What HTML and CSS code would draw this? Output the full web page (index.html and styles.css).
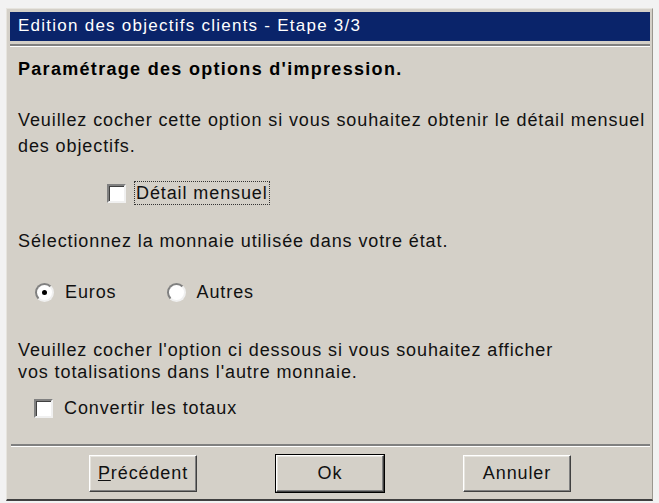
FILE: index.html
```html
<!DOCTYPE html>
<html lang="fr">
<head>
    <meta charset="UTF-8">
    <title>Edition des objectifs clients - Etape 3/3</title>
    <link rel="stylesheet" href="styles.css">
</head>
<body>

    <!-- Dialog window -->
    <div class="window">
        <div class="titlebar">Edition des objectifs clients - Etape 3/3</div>
        <div class="separator"></div>

        <div class="content">
            <h1 class="heading">Paramétrage des options d'impression.</h1>

            <p class="text text-first">Veuillez cocher cette option si vous souhaitez obtenir le détail mensuel<br>des objectifs.</p>

            <label class="option option-detail">
                <span class="checkbox"></span>
                <span class="focus-label">Détail mensuel</span>
            </label>

            <p class="text text-currency">Sélectionnez la monnaie utilisée dans votre état.</p>

            <div class="radios">
                <label class="option">
                    <span class="radio checked"></span>
                    <span>Euros</span>
                </label>
                <label class="option">
                    <span class="radio"></span>
                    <span>Autres</span>
                </label>
            </div>

            <p class="text text-convert">Veuillez cocher l'option ci dessous si vous souhaitez afficher<br>vos totalisations dans l'autre monnaie.</p>

            <label class="option option-convert">
                <span class="checkbox"></span>
                <span>Convertir les totaux</span>
            </label>
        </div>

        <div class="separator separator-bottom"></div>

        <div class="buttons">
            <button class="btn"><u>P</u>récédent</button>
            <button class="btn btn-default">Ok</button>
            <button class="btn">Annuler</button>
        </div>
    </div>

</body>
</html>
```

FILE: styles.css
```css
body {
    margin: 0;
    background-color: #f2f2f2;
    font-family: "Liberation Sans", Arial, sans-serif;
    font-size: 18px;
    letter-spacing: 0.9px;
    color: #111;
}

.window {
    margin: 8px 6px 0 6px;
    height: 493px;
    box-sizing: border-box;
    padding: 3px 2px 0 3px;
    background-color: #d4d0c8;
    border-top: 1px solid #e6e4de;
    border-left: 1px solid #e6e4de;
    border-right: 1px solid #9a978f;
    border-bottom: 2px solid #404040;
    display: flex;
    flex-direction: column;
}

.titlebar {
    height: 29px;
    line-height: 28px;
    padding-left: 8px;
    background-color: #0a246a;
    color: #fff;
    font-size: 17px;
    letter-spacing: 1.25px;
}

.separator {
    margin-top: 3px;
    border-top: 2px solid #808080;
    border-bottom: 1px solid #fff;
}

.content {
    flex: 1;
    padding-left: 8px;
    white-space: nowrap;
}

.heading {
    margin: 11px 0 0 0;
    font-size: 18px;
    line-height: 22px;
    font-weight: bold;
    letter-spacing: 1.3px;
    color: #000;
}

.text {
    margin: 0;
    line-height: 26px;
}

.text-first {
    margin-top: 27px;
}

.text-currency {
    margin-top: 24px;
}

.text-convert {
    margin-top: 36px;
    line-height: 22px;
}

.option {
    display: flex;
    align-items: center;
    gap: 11px;
}

.option-detail {
    margin-top: 23px;
    margin-left: 89px;
    gap: 9px;
}

.option-convert {
    margin-top: 15px;
    margin-left: 16px;
}

.checkbox {
    width: 15px;
    height: 15px;
    background-color: #fff;
    border-top: 2px solid #808080;
    border-left: 2px solid #808080;
    border-right: 2px solid #f0f0f0;
    border-bottom: 2px solid #f0f0f0;
    box-shadow: inset 1px 1px 0 #404040;
}

.focus-label {
    padding: 0 1px;
    line-height: 22px;
    outline: 1px dotted #333;
}

.radios {
    display: flex;
    gap: 50px;
    margin-top: 28px;
    margin-left: 17px;
}

.radio {
    width: 19px;
    height: 19px;
    border-radius: 50%;
    box-sizing: border-box;
    background-color: #fff;
    border: 2px solid;
    border-color: #808080 #f0f0f0 #f0f0f0 #808080;
    display: flex;
    align-items: center;
    justify-content: center;
}

.radio.checked::after {
    content: "";
    width: 5px;
    height: 5px;
    border-radius: 50%;
    background-color: #000;
}

.separator-bottom {
    margin: 0 0 0 1px;
}

.buttons {
    display: flex;
    justify-content: center;
    gap: 79px;
    padding: 8px 0 7px 0;
}

.btn {
    width: 108px;
    height: 37px;
    font-family: "Liberation Sans", Arial, sans-serif;
    font-size: 18px;
    letter-spacing: 0.9px;
    color: #111;
    background-color: #d4d0c8;
    border: 1px solid;
    border-color: #fff #404040 #404040 #fff;
    box-shadow: inset -1px -1px 0 #808080, inset 1px 1px 0 #e6e4de;
    padding: 0;
}

.btn-default {
    outline: 1px solid #000;
}
```
